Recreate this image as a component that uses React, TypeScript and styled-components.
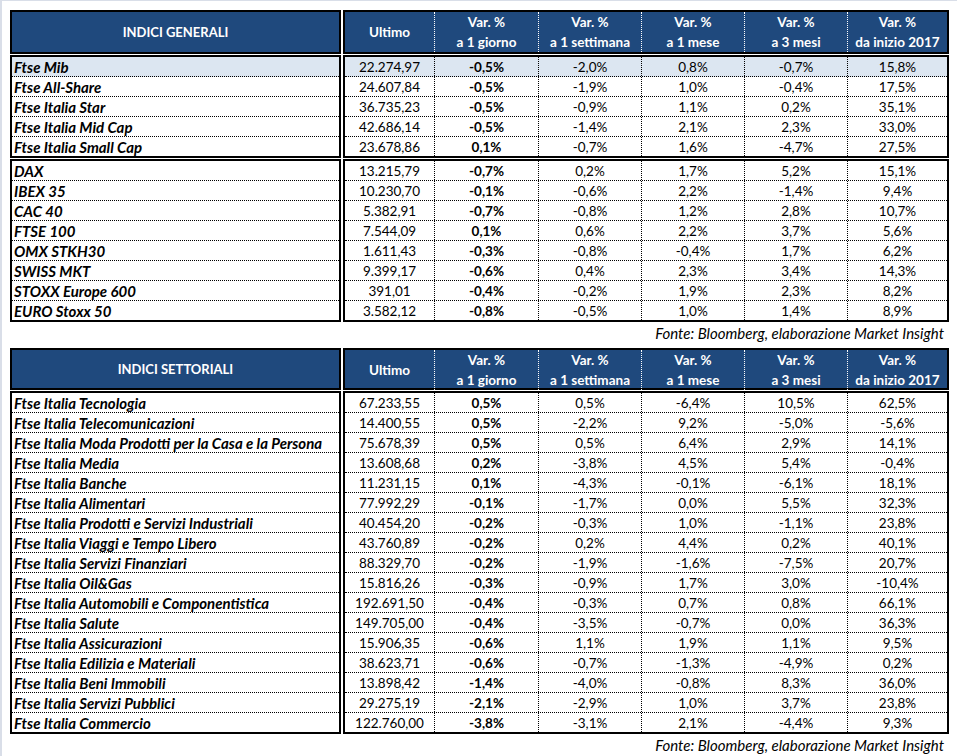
import { styled, createGlobalStyle } from 'styled-components';

const GlobalStyle = createGlobalStyle`
  html, body {
    margin: 0;
    padding: 0;
    background: #ffffff;
  }
  body {
    border-top: 1px solid #d9dee8;
    border-left: 2px solid #d9dee8;
    font-family: Lato, 'Liberation Sans', sans-serif;
    color: #000000;
  }
`;

type Row = [string, string, string, string, string, string, string];

interface TableProps {
  title: string;
  groups: Row[][];
  headerHeight: number;
  highlightFirst?: boolean;
}

const headings = [
  ['Var. %', 'a 1 giorno'],
  ['Var. %', 'a 1 settimana'],
  ['Var. %', 'a 1 mese'],
  ['Var. %', 'a 3 mesi'],
  ['Var. %', 'da inizio 2017'],
];

const generali: Row[][] = [
  [
    ['Ftse Mib', '22.274,97', '-0,5%', '-2,0%', '0,8%', '-0,7%', '15,8%'],
    ['Ftse All-Share', '24.607,84', '-0,5%', '-1,9%', '1,0%', '-0,4%', '17,5%'],
    ['Ftse Italia Star', '36.735,23', '-0,5%', '-0,9%', '1,1%', '0,2%', '35,1%'],
    ['Ftse Italia Mid Cap', '42.686,14', '-0,5%', '-1,4%', '2,1%', '2,3%', '33,0%'],
    ['Ftse Italia Small Cap', '23.678,86', '0,1%', '-0,7%', '1,6%', '-4,7%', '27,5%'],
  ],
  [
    ['DAX', '13.215,79', '-0,7%', '0,2%', '1,7%', '5,2%', '15,1%'],
    ['IBEX 35', '10.230,70', '-0,1%', '-0,6%', '2,2%', '-1,4%', '9,4%'],
    ['CAC 40', '5.382,91', '-0,7%', '-0,8%', '1,2%', '2,8%', '10,7%'],
    ['FTSE 100', '7.544,09', '0,1%', '0,6%', '2,2%', '3,7%', '5,6%'],
    ['OMX STKH30', '1.611,43', '-0,3%', '-0,8%', '-0,4%', '1,7%', '6,2%'],
    ['SWISS MKT', '9.399,17', '-0,6%', '0,4%', '2,3%', '3,4%', '14,3%'],
    ['STOXX Europe 600', '391,01', '-0,4%', '-0,2%', '1,9%', '2,3%', '8,2%'],
    ['EURO Stoxx 50', '3.582,12', '-0,8%', '-0,5%', '1,0%', '1,4%', '8,9%'],
  ],
];

const settoriali: Row[][] = [
  [
    ['Ftse Italia Tecnologia', '67.233,55', '0,5%', '0,5%', '-6,4%', '10,5%', '62,5%'],
    ['Ftse Italia Telecomunicazioni', '14.400,55', '0,5%', '-2,2%', '9,2%', '-5,0%', '-5,6%'],
    ['Ftse Italia Moda Prodotti per la Casa e la Persona', '75.678,39', '0,5%', '0,5%', '6,4%', '2,9%', '14,1%'],
    ['Ftse Italia Media', '13.608,68', '0,2%', '-3,8%', '4,5%', '5,4%', '-0,4%'],
    ['Ftse Italia Banche', '11.231,15', '0,1%', '-4,3%', '-0,1%', '-6,1%', '18,1%'],
    ['Ftse Italia Alimentari', '77.992,29', '-0,1%', '-1,7%', '0,0%', '5,5%', '32,3%'],
    ['Ftse Italia Prodotti e Servizi Industriali', '40.454,20', '-0,2%', '-0,3%', '1,0%', '-1,1%', '23,8%'],
    ['Ftse Italia Viaggi e Tempo Libero', '43.760,89', '-0,2%', '0,2%', '4,4%', '0,2%', '40,1%'],
    ['Ftse Italia Servizi Finanziari', '88.329,70', '-0,2%', '-1,9%', '-1,6%', '-7,5%', '20,7%'],
    ['Ftse Italia Oil&Gas', '15.816,26', '-0,3%', '-0,9%', '1,7%', '3,0%', '-10,4%'],
    ['Ftse Italia Automobili e Componentistica', '192.691,50', '-0,4%', '-0,3%', '0,7%', '0,8%', '66,1%'],
    ['Ftse Italia Salute', '149.705,00', '-0,4%', '-3,5%', '-0,7%', '0,0%', '36,3%'],
    ['Ftse Italia Assicurazioni', '15.906,35', '-0,6%', '1,1%', '1,9%', '1,1%', '9,5%'],
    ['Ftse Italia Edilizia e Materiali', '38.623,71', '-0,6%', '-0,7%', '-1,3%', '-4,9%', '0,2%'],
    ['Ftse Italia Beni Immobili', '13.898,42', '-1,4%', '-4,0%', '-0,8%', '8,3%', '36,0%'],
    ['Ftse Italia Servizi Pubblici', '29.275,19', '-2,1%', '-2,9%', '1,0%', '3,7%', '23,8%'],
    ['Ftse Italia Commercio', '122.760,00', '-3,8%', '-3,1%', '2,1%', '-4,4%', '9,3%'],
  ],
];

const IndexTable = ({ title, groups, headerHeight, highlightFirst }: TableProps) => (
  <StTable>
    <StBand>
      <StNameBox>
        <StNameHeader $height={headerHeight}>{title}</StNameHeader>
      </StNameBox>
      <StDataBox>
        <StHeaderGrid $height={headerHeight}>
          <StHeadCell>Ultimo</StHeadCell>
          {headings.map(([top, bottom]) => (
            <StHeadCell key={bottom} $split>
              <span>{top}</span>
              <span>{bottom}</span>
            </StHeadCell>
          ))}
        </StHeaderGrid>
      </StDataBox>
    </StBand>
    {groups.map((rows, g) => (
      <StBand key={g}>
        <StNameBox $body>
          {rows.map((row, i) => (
            <StNameCell key={row[0]} $highlight={!!highlightFirst && g === 0 && i === 0}>
              {row[0]}
            </StNameCell>
          ))}
        </StNameBox>
        <StDataBox $body>
          {rows.map((row, i) => (
            <StDataRow key={row[0]} $highlight={!!highlightFirst && g === 0 && i === 0}>
              {row.slice(1).map((value, c) => (
                <StValue key={c} $bold={c === 1}>
                  {value}
                </StValue>
              ))}
            </StDataRow>
          ))}
        </StDataBox>
      </StBand>
    ))}
    <StSource>Fonte: Bloomberg, elaborazione Market Insight</StSource>
  </StTable>
);

const App = () => (
  <>
    <GlobalStyle />
    <StPage>
      <IndexTable title="INDICI GENERALI" groups={generali} headerHeight={40} highlightFirst />
      <IndexTable title="INDICI SETTORIALI" groups={settoriali} headerHeight={38} />
    </StPage>
  </>
);

const StPage = styled.div`
  width: 939px;
  padding: 9px 0 0 8px;
  display: flex;
  flex-direction: column;
`;

const StTable = styled.div`
  display: flex;
  flex-direction: column;
  gap: 1px;
`;

const StBand = styled.div`
  display: flex;
  gap: 2px;
`;

const StNameBox = styled.div<{ $body?: boolean }>`
  width: 327px;
  border: 2px solid #000000;
  background: ${({ $body }) => ($body ? '#ffffff' : '#1f497d')};
`;

const StDataBox = styled.div<{ $body?: boolean }>`
  flex: 1;
  border: 2px solid #000000;
  background: ${({ $body }) => ($body ? '#ffffff' : '#1f497d')};
`;

const StNameHeader = styled.div<{ $height: number }>`
  height: ${({ $height }) => $height}px;
  display: flex;
  align-items: center;
  justify-content: center;
  color: #ffffff;
  font-weight: bold;
  font-size: 13px;
`;

const StHeaderGrid = styled.div<{ $height: number }>`
  height: ${({ $height }) => $height}px;
  display: grid;
  grid-template-columns: 89px 104px 103px 103px 103px 1fr;
`;

const StHeadCell = styled.div<{ $split?: boolean }>`
  display: flex;
  flex-direction: column;
  align-items: center;
  justify-content: ${({ $split }) => ($split ? 'flex-end' : 'center')};
  color: #ffffff;
  font-weight: bold;
  font-size: 13.5px;
  line-height: 20px;
  border-left: ${({ $split }) => ($split ? '1px dotted #ffffff' : 'none')};
  white-space: nowrap;
`;

const StNameCell = styled.div<{ $highlight: boolean }>`
  height: 18px;
  padding: 1px 0 0 2px;
  line-height: 18px;
  border-bottom: 1px dotted #000000;
  background: ${({ $highlight }) => ($highlight ? '#dce6f1' : 'transparent')};
  font-size: 15px;
  font-weight: bold;
  font-style: italic;
  white-space: nowrap;

  &:last-child {
    border-bottom: none;
  }
`;

const StDataRow = styled.div<{ $highlight: boolean }>`
  height: 19px;
  display: grid;
  grid-template-columns: 89px 104px 103px 103px 103px 1fr;
  border-bottom: 1px dotted #000000;
  background: ${({ $highlight }) => ($highlight ? '#dce6f1' : 'transparent')};

  &:last-child {
    border-bottom: none;
  }
`;

const StValue = styled.div<{ $bold: boolean }>`
  padding-top: 1px;
  line-height: 18px;
  text-align: center;
  font-size: 13.5px;
  font-weight: ${({ $bold }) => ($bold ? 'bold' : 'normal')};
  white-space: nowrap;

  & + & {
    border-left: 1px dotted #000000;
  }
`;

const StSource = styled.div`
  height: 25px;
  line-height: 20px;
  padding-right: 5px;
  text-align: right;
  font-size: 15px;
  font-style: italic;
`;

export default App;
